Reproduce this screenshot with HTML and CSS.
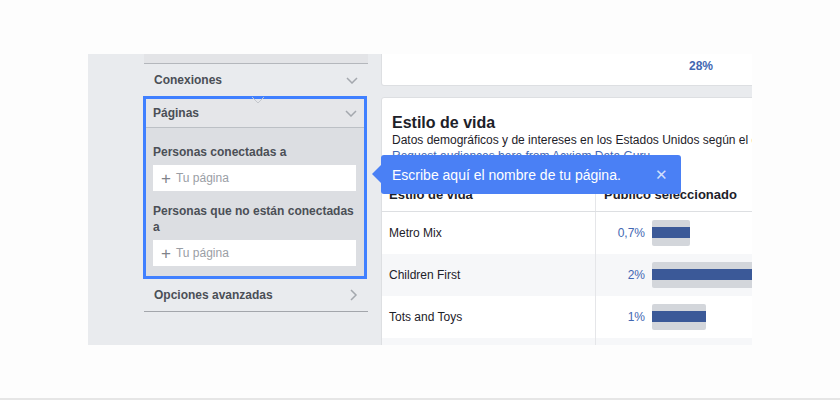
FILE: index.html
```html
<!DOCTYPE html>
<html lang="es">

<head>
   <meta charset="UTF-8">
   <meta name="viewport" content="width=device-width, initial-scale=1.0">
   <title>Públicos - Páginas</title>
   <link rel="stylesheet" href="styles.css">
</head>

<body>
   <div class="captura">
      <!-- Columna de filtros -->
      <div class="lateral">
         <div class="panel">
            <div class="panel-tope"></div>
            <div class="fila">
               <span>Conexiones</span>
               <svg class="flecha" width="12" height="7" viewBox="0 0 12 7"><polyline points="1,1 6,6 11,1" /></svg>
            </div>
            <div class="caja">
               <svg class="muesca" width="14" height="7" viewBox="0 0 14 7"><polyline points="1,0 7,6 13,0" /></svg>
               <div class="caja-cabecera">
                  <span>Páginas</span>
                  <svg class="flecha" width="12" height="7" viewBox="0 0 12 7"><polyline points="1,1 6,6 11,1" /></svg>
               </div>
               <div class="caja-cuerpo">
                  <div class="etiqueta">Personas conectadas a</div>
                  <div class="entrada"><span class="mas">+</span>Tu página</div>
                  <div class="etiqueta segunda">Personas que no están conectadas a</div>
                  <div class="entrada"><span class="mas">+</span>Tu página</div>
               </div>
            </div>
            <div class="fila fila-fin">
               <span>Opciones avanzadas</span>
               <svg class="flecha" width="8" height="12" viewBox="0 0 8 12"><polyline points="1,1 6,6 1,11" /></svg>
            </div>
         </div>
      </div>

      <!-- Columna de resultados -->
      <div class="principal">
         <div class="tarjeta tarjeta-arriba">
            <span class="valor">28%</span>
         </div>
         <div class="tarjeta">
            <h2>Estilo de vida</h2>
            <p class="descripcion">Datos demográficos y de intereses en los Estados Unidos según el comportamiento de compra.</p>
            <p class="enlace">Request audiences here from Acxiom Data Guru</p>
            <div class="tabla">
               <div class="fila-tabla cabecera">
                  <div class="celda">Estilo de vida</div>
                  <div class="celda">Público seleccionado</div>
               </div>
               <div class="fila-tabla">
                  <div class="celda">Metro Mix</div>
                  <div class="celda"><span class="pct">0,7%</span><span class="barra" style="width:38px"></span></div>
               </div>
               <div class="fila-tabla par">
                  <div class="celda">Children First</div>
                  <div class="celda"><span class="pct">2%</span><span class="barra" style="width:108px"></span></div>
               </div>
               <div class="fila-tabla">
                  <div class="celda">Tots and Toys</div>
                  <div class="celda"><span class="pct">1%</span><span class="barra" style="width:54px"></span></div>
               </div>
               <div class="fila-tabla par">
                  <div class="celda"></div>
                  <div class="celda"></div>
               </div>
            </div>
         </div>
      </div>

      <!-- Globo de ayuda -->
      <div class="globo">
         <span>Escribe aquí el nombre de tu página.</span>
         <span class="cerrar">&#x2715;</span>
      </div>
   </div>

   <div class="linea-final"></div>
</body>

</html>
```

FILE: styles.css
```css
/* Estilos generales */
body {
   margin: 0;
   background: #fdfdfd;
   font-family: "Liberation Sans", Arial, sans-serif;
   color: #4b4f56;
}

/* Recorte de la pantalla */
.captura {
   position: relative;
   display: flex;
   width: 664px;
   height: 291px;
   margin: 54px 0 0 88px;
   background: #e9ebee;
   overflow: hidden;
}

/* Columna de filtros */
.lateral {
   flex: none;
   width: 224px;
   padding-left: 56px;
   margin-right: 13px;
}

.panel-tope {
   height: 9px;
   background: #e3e4e7;
   border-bottom: 1px solid #b4b7bc;
}

.fila {
   display: flex;
   align-items: center;
   justify-content: space-between;
   height: 32px;
   padding: 0 10px;
   font-size: 12px;
   font-weight: bold;
}

.fila-fin {
   border-bottom: 1px solid #a3a6ab;
}

.flecha polyline {
   fill: none;
   stroke: #a4a8ae;
   stroke-width: 1.5;
}

/* Caja seleccionada */
.caja {
   position: relative;
   margin: 0 1px 0 -1px;
   border: 3px solid #4080ff;
}

.muesca {
   position: absolute;
   top: -2px;
   left: 105px;
}

.muesca polyline {
   fill: none;
   stroke: #c4c7cc;
   stroke-width: 1;
}

.caja-cabecera {
   display: flex;
   align-items: center;
   justify-content: space-between;
   height: 28px;
   padding: 0 7px;
   background: #e5e6e9;
   border-bottom: 1px solid #bcc0c5;
   font-size: 12px;
   font-weight: bold;
}

.caja-cuerpo {
   padding: 16px 8px 10px 7px;
   background: #dcdee2;
}

.etiqueta {
   font-size: 12px;
   font-weight: bold;
   line-height: 16px;
   margin-bottom: 5px;
}

.etiqueta.segunda {
   margin-top: 12px;
}

.entrada {
   display: flex;
   align-items: center;
   height: 26px;
   padding-left: 8px;
   background: #fff;
   font-size: 12px;
   color: #9a9ea5;
}

.mas {
   font-size: 17px;
   font-weight: 300;
   color: #7f838a;
   margin-right: 5px;
   line-height: 1;
}

/* Columna de resultados */
.principal {
   flex: none;
   width: 430px;
}

.tarjeta {
   background: #fff;
   border: 1px solid #dddfe2;
   border-radius: 3px;
}

.tarjeta-arriba {
   height: 31px;
   border-top: none;
   border-radius: 0 0 3px 3px;
   margin-bottom: 11px;
}

.valor {
   display: block;
   padding: 5px 0 0 307px;
   font-size: 12px;
   font-weight: bold;
   color: #4267b2;
}

h2 {
   margin: 0;
   padding: 15px 10px 0;
   font-size: 16px;
   line-height: 20px;
   color: #1d2129;
}

.descripcion,
.enlace {
   margin: 0;
   padding: 0 10px;
   font-size: 12px;
   line-height: 14px;
   white-space: nowrap;
}

.descripcion {
   color: #1d2129;
}

.enlace {
   margin-top: 2px;
   color: #4267b2;
}

/* Tabla de estilos de vida */
.tabla {
   margin-top: 15px;
}

.fila-tabla {
   display: grid;
   grid-template-columns: 214px 1fr;
   height: 42px;
   font-size: 12px;
   color: #1d2129;
}

.fila-tabla.par {
   background: #f6f7f9;
}

.celda {
   display: flex;
   align-items: center;
   padding-left: 7px;
}

.celda:first-child {
   border-right: 1px solid #e5e6e9;
}

.celda + .celda {
   padding-left: 8px;
}

.cabecera {
   height: 33px;
   border-bottom: 1px solid #dddfe2;
   font-size: 13px;
   font-weight: bold;
}

.pct {
   width: 41px;
   text-align: right;
   color: #4267b2;
   margin-right: 7px;
}

.barra {
   flex: none;
   height: 26px;
   border-radius: 2px;
   background: linear-gradient(#d3d6db 7px, #3b5998 7px, #3b5998 18px, #d3d6db 18px);
}

/* Globo de ayuda */
.globo {
   position: absolute;
   left: 293px;
   top: 101px;
   display: flex;
   align-items: center;
   justify-content: space-between;
   width: 300px;
   height: 39px;
   padding: 0 13px 0 11px;
   box-sizing: border-box;
   background: #4a80f5;
   border-radius: 3px;
   color: #fff;
   font-size: 14px;
}

.globo::before {
   content: "";
   position: absolute;
   left: -9px;
   top: 10px;
   border-top: 9px solid transparent;
   border-bottom: 9px solid transparent;
   border-right: 9px solid #4a80f5;
}

.cerrar {
   font-size: 15px;
   color: rgba(255, 255, 255, 0.75);
}

.linea-final {
   height: 2px;
   margin-top: 53px;
   background: #e6e6e6;
}
```
